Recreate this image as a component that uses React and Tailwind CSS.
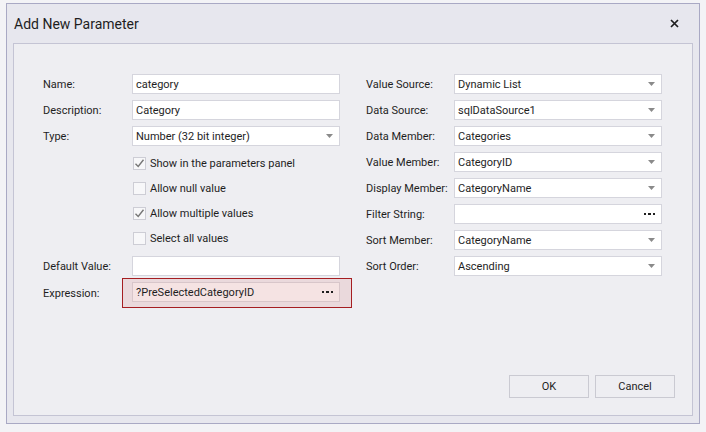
import React from 'react'

const font = { fontFamily: 'Roboto, "Noto Sans", Arial, sans-serif' }

const Arrow = () => (
       <svg width="7" height="4" viewBox="0 0 7 4" className="shrink-0">
              <path d="M0 0 H7 L3.5 4 Z" fill="#8a8a8a" />
       </svg>
)

const Dots = () => (
       <div className="flex items-center gap-[2px] shrink-0">
              <span className="w-[2.5px] h-[2.5px] bg-[#1e1e1e]" />
              <span className="w-[2.5px] h-[2.5px] bg-[#1e1e1e]" />
              <span className="w-[2.5px] h-[2.5px] bg-[#1e1e1e]" />
       </div>
)

const Field = ({ value = '', kind = 'text', tint = false }) => (
       <div className={`h-[20px] w-[208px] flex items-center justify-between pl-[3px] pr-[6px] border ${tint ? 'bg-[#f5e3e3] border-[#d8c6ca]' : 'bg-white border-[#d5d5dd]'}`}>
              <span className="pt-[2px] text-[11px] text-[#1e1e1e] whitespace-nowrap">{value}</span>
              {kind === 'combo' && <Arrow />}
              {kind === 'dots' && <Dots />}
       </div>
)

const Row = ({ label, children }) => (
       <div className="flex items-center h-[20px]">
              <span className="w-[89px] pt-[2px] text-[11px] text-[#1e1e1e] whitespace-nowrap">{label}</span>
              {children}
       </div>
)

const Check = ({ checked, label }) => (
       <div className="flex items-center h-[25px] pl-[90px]">
              <div className="w-[13px] h-[13px] border border-[#cdcdd5] bg-[#f7f7f9] flex items-center justify-center">
                     {checked && (
                            <svg width="11" height="11" viewBox="0 0 11 11">
                                   <path d="M1.5 5.8 L4.2 8.5 L9.5 1.8" fill="none" stroke="#767676" strokeWidth="1.4" />
                            </svg>
                     )}
              </div>
              <span className="ml-[4px] pt-[2px] text-[11px] text-[#1e1e1e] whitespace-nowrap">{label}</span>
       </div>
)

const Button = ({ text }) => (
       <button className="w-[80px] h-[23px] border border-[#cacad2] bg-[#eeeef2] text-[11px] text-[#1e1e1e] leading-none">
              {text}
       </button>
)

const App = () => {
       const right = [
              ['Value Source:', 'Dynamic List', 'combo'],
              ['Data Source:', 'sqlDataSource1', 'combo'],
              ['Data Member:', 'Categories', 'combo'],
              ['Value Member:', 'CategoryID', 'combo'],
              ['Display Member:', 'CategoryName', 'combo'],
              ['Filter String:', '', 'dots'],
              ['Sort Member:', 'CategoryName', 'combo'],
              ['Sort Order:', 'Ascending', 'combo'],
       ]

       return (
              <div className="w-[706px] h-[432px] bg-[#f3f3f6] pt-[3px] pl-[6px]" style={font}>
                     {/* Dialog window */}
                     <div className="w-[694px] h-[421px] border border-[#a9a9c4] bg-[#e7e7ee] flex flex-col">
                            {/* Title bar */}
                            <div className="h-[39px] flex items-center justify-between pl-[7px] pr-[20px] shrink-0">
                                   <span className="pt-[2px] text-[14px] text-[#1e1e1e] whitespace-nowrap">Add New Parameter</span>
                                   <svg width="9" height="9" viewBox="0 0 9 9">
                                          <path d="M1 1 L8 8 M8 1 L1 8" stroke="#1e1e1e" strokeWidth="1.7" />
                                   </svg>
                            </div>

                            {/* Content panel */}
                            <div className="flex-1 mx-[6px] mb-[7px] border border-[#c4c4d4] bg-[#eeeef2] flex flex-col pt-[30px] pl-[29px] pr-[17px] pb-[17px]">
                                   <div className="flex gap-[26px]">
                                          {/* Left column */}
                                          <div className="flex flex-col">
                                                 <div className="flex flex-col gap-[6px]">
                                                        <Row label="Name:"><Field value="category" /></Row>
                                                        <Row label="Description:"><Field value="Category" /></Row>
                                                        <Row label="Type:"><Field value="Number (32 bit integer)" kind="combo" /></Row>
                                                 </div>
                                                 <div className="flex flex-col mt-[5px]">
                                                        <Check checked label="Show in the parameters panel" />
                                                        <Check label="Allow null value" />
                                                        <Check checked label="Allow multiple values" />
                                                        <Check label="Select all values" />
                                                 </div>
                                                 <div className="mt-[5px]">
                                                        <Row label="Default Value:"><Field /></Row>
                                                 </div>
                                                 <div className="flex items-center mt-[2px]">
                                                        <span className="w-[89px] pt-[2px] text-[11px] text-[#1e1e1e] whitespace-nowrap">Expression:</span>
                                                        <div className="-ml-[10px] -mr-[12px] pl-[9px] pr-[11px] pt-[3px] pb-[5px] border border-[#a51e22] bg-[#ead9dc]">
                                                               <Field value="?PreSelectedCategoryID" kind="dots" tint />
                                                        </div>
                                                 </div>
                                          </div>

                                          {/* Right column */}
                                          <div className="flex flex-col gap-[6px]">
                                                 {right.map(([label, value, kind]) => (
                                                        <div key={label} className="flex items-center h-[20px]">
                                                               <span className="w-[88px] pt-[2px] text-[11px] text-[#1e1e1e] whitespace-nowrap">{label}</span>
                                                               <Field value={value} kind={kind} />
                                                        </div>
                                                 ))}
                                          </div>
                                   </div>

                                   {/* Buttons */}
                                   <div className="mt-auto flex justify-end gap-[6px]">
                                          <Button text="OK" />
                                          <Button text="Cancel" />
                                   </div>
                            </div>
                     </div>
              </div>
       )
}

export default App
